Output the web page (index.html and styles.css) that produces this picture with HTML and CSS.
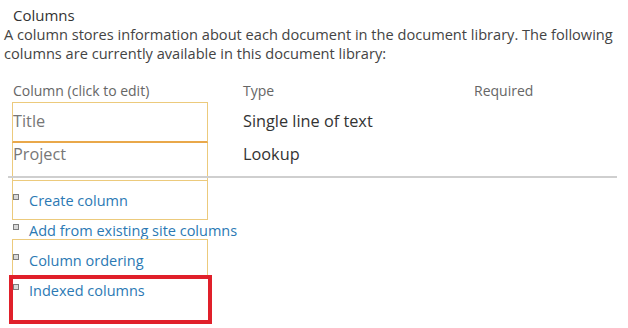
FILE: index.html
```html
<!DOCTYPE html>
<html lang="en">
<head>
  <meta charset="UTF-8" />
  <title>Columns</title>
  <link rel="stylesheet" href="styles.css">
</head>
<body>

  <h2 class="heading">Columns</h2>
  <p class="desc">A column stores information about each document in the document library. The following columns are currently available in this document library:</p>

  <div class="row head">
    <div class="name">Column (click to edit)</div>
    <div class="type">Type</div>
    <div class="req">Required</div>
  </div>
  <div class="row item mark-title">
    <div class="name">Title</div>
    <div class="type">Single line of text</div>
    <div class="req"></div>
  </div>
  <div class="row item mark-project">
    <div class="name">Project</div>
    <div class="type">Lookup</div>
    <div class="req"></div>
  </div>

  <div class="sep"></div>

  <ul class="actions">
    <li class="mark-create"><span class="bullet"></span><a href="#">Create column</a></li>
    <li><span class="bullet"></span><a href="#">Add from existing site columns</a></li>
    <li class="mark-order"><span class="bullet"></span><a href="#">Column ordering</a></li>
    <li class="mark-red"><span class="bullet"></span><a href="#">Indexed columns</a></li>
  </ul>

</body>
</html>
```

FILE: styles.css
```css
body {
  font-family: "Open Sans", Arial, sans-serif;
  background-color: #ffffff;
  color: #444;
  margin: 0;
  width: 628px;
}

.heading {
  font-size: 15px;
  font-weight: normal;
  line-height: 19px;
  color: #333;
  margin: 6px 0 0 13px;
}

.desc {
  font-size: 14.6px;
  line-height: 19px;
  color: #444;
  margin: 0 0 0 4px;
  width: 620px;
}

.row {
  display: flex;
  position: relative;
  padding-left: 13px;
}

.row .name {
  width: 230px;
}

.row .type {
  width: 231px;
}

.head {
  font-size: 14px;
  line-height: 18px;
  color: #666;
  margin-top: 19px;
}

.item {
  font-size: 16.3px;
  line-height: 33px;
}

.item .name {
  color: #777;
}

.item .type {
  color: #333;
}

.mark-title {
  margin-top: 5px;
}

/* annotation boxes drawn over the screenshot */
.mark-title::before,
.mark-project::before,
.mark-create::before,
.mark-order::before,
.mark-red::before {
  content: "";
  position: absolute;
  left: 12px;
  width: 194px;
  border: 1px solid #ecca7c;
}

.mark-title::before {
  top: -3px;
  height: 38px;
  border-bottom: 2px solid #e9a84a;
}

.mark-project::before {
  top: 5px;
  height: 37px;
  border-top: none;
}

.sep {
  height: 2px;
  background: #cfcfcf;
  margin: 5px 11px 0 8px;
  position: relative;
  z-index: 1;
}

.actions {
  list-style: none;
  margin: 8px 0 0 0;
  padding: 0;
  font-size: 14.5px;
  line-height: 30px;
}

.actions li {
  position: relative;
  padding-left: 13px;
}

.actions a {
  color: #2b79b4;
  text-decoration: none;
}

.bullet {
  display: inline-block;
  width: 4px;
  height: 4px;
  border: 1px solid #7d7d7d;
  background: #d9d9d9;
  margin-right: 10px;
  vertical-align: 6px;
}

.mark-create::before {
  top: -6px;
  height: 38px;
}

.mark-order::before {
  top: -7px;
  height: 38px;
}

.actions .mark-red {
  height: 49px;
}

.mark-red::before {
  left: 9px;
  top: -1px;
  width: 195px;
  height: 41px;
  border: 4px solid #e0202a;
}
```
